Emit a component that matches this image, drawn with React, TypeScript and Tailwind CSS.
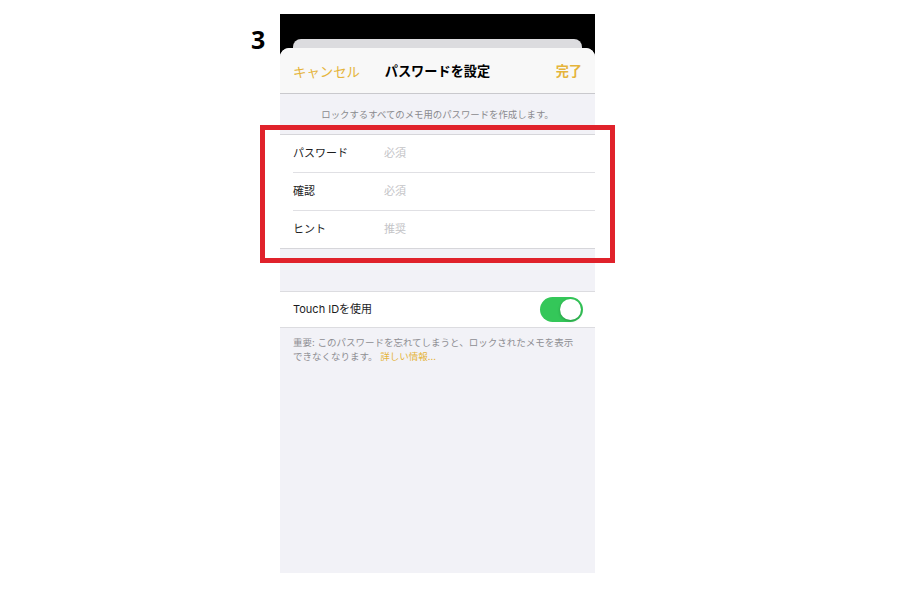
import React from 'react';

const font = "font-['Inter','Noto_Sans_CJK_JP',sans-serif]";

const fields = [
  { label: 'パスワード', placeholder: '必須' },
  { label: '確認', placeholder: '必須' },
  { label: 'ヒント', placeholder: '推奨' },
];

const Toggle: React.FC = () => (
  <div className="w-[43px] h-[25px] rounded-full bg-[#34c759] p-[2px] flex justify-end">
    <div className="w-[21px] h-[21px] rounded-full bg-white shadow-[0_1px_3px_rgba(0,0,0,0.25)]" />
  </div>
);

const App: React.FC = () => {
  return (
    <div className={`w-[900px] h-[600px] bg-white relative ${font}`}>
      <div className="flex pl-[251px] pt-[14px]">
        <div className="w-[29px] pt-[10px] text-[25px] leading-[30px] font-bold text-black font-['Noto_Sans',sans-serif]">3</div>

        <div className="w-[315px] h-[559px] bg-black flex flex-col">
          {/* card stacked behind the sheet */}
          <div className="mt-[25px] mx-[13px] h-[9px] rounded-t-[8px] bg-[#dcdcdf]" />

          <div className="flex-1 rounded-t-[9px] overflow-hidden bg-[#f2f2f7] flex flex-col">
            <div className="h-[46px] pt-[3px] bg-[#f8f8f8] border-b border-[#c9c9cd] grid grid-cols-[1fr_auto_1fr] items-center px-[13px]">
              <span className="text-[13.4px] text-[#e5b43a]">キャンセル</span>
              <span className="text-[13.2px] font-bold text-black">パスワードを設定</span>
              <span className="text-[13.2px] font-bold text-[#e5b43a] justify-self-end">完了</span>
            </div>

            <div className="h-[40px] pt-[2px] flex items-center justify-center text-[9.4px] text-[#8a8a8e]">
              ロックするすべてのメモ用のパスワードを作成します。
            </div>

            <div className="bg-white border-y border-[#d6d6da]">
              {fields.map((f, i) => (
                <div key={f.label} className="pl-[13px]">
                  <div
                    className={`flex items-center text-[11px] ${
                      i < fields.length - 1 ? 'h-[38px] border-b border-[#e0e0e4]' : 'h-[37px]'
                    }`}
                  >
                    <span className="w-[91px] text-[#1c1c1e]">{f.label}</span>
                    <span className="text-[#c4c4c7]">{f.placeholder}</span>
                  </div>
                </div>
              ))}
            </div>

            <div className="h-[42px]" />

            <div className="h-[37px] bg-white border-y border-[#dcdce0] flex items-center justify-between pl-[13px] pr-[12px]">
              <span className="text-[11px] text-[#1c1c1e]">Touch IDを使用</span>
              <Toggle />
            </div>

            <div className="pl-[13px] pr-[12px] pt-[8px] text-[9.5px] leading-[14px] text-[#8e8e93]">
              <p>重要: このパスワードを忘れてしまうと、ロックされたメモを表示</p>
              <p>
                できなくなります。 <span className="text-[#e5b43a]">詳しい情報...</span>
              </p>
            </div>
          </div>
        </div>
      </div>

      {/* red annotation frame */}
      <div className="absolute left-[260px] top-[125px] w-[355px] h-[138px] border-[5px] border-[#e0222b]" />
    </div>
  );
};

export default App;
